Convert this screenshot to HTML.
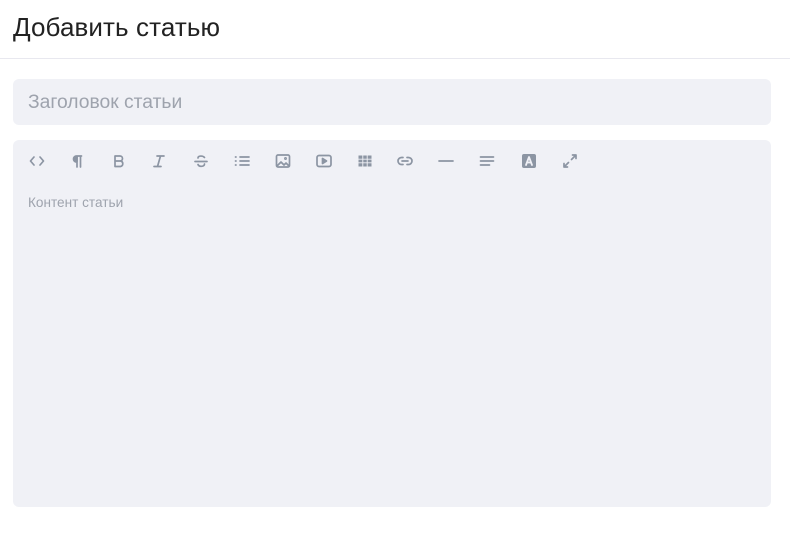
<!DOCTYPE html><html><head><meta charset="utf-8"><style>
body{margin:0;width:790px;height:542px;background:#fff;font-family:"Liberation Sans",sans-serif;position:relative;overflow:hidden}
h1{position:absolute;left:13px;top:10px;margin:0;font-size:26px;font-weight:normal;color:#222;line-height:34px;letter-spacing:0.1px}
.hr{position:absolute;left:0;top:58px;width:790px;height:1px;background:#e8e8ef}
.in{position:absolute;left:13px;top:79px;width:758px;height:46px;background:#f0f1f6;border-radius:6px}
.in span{position:absolute;left:15px;top:13px;font-size:19.3px;color:#9ea3ad}
.ed{position:absolute;left:13px;top:140px;width:758px;height:367px;background:#f0f1f6;border-radius:6px}
.ed .ph{position:absolute;left:15px;top:55px;font-size:13.6px;color:#9ea3ad}
svg.i{position:absolute;top:13px;width:16px;height:16px;fill:none;stroke:#8c95a3;stroke-width:1.7;stroke-linecap:round;stroke-linejoin:round}
</style></head><body>
<h1>Добавить статью</h1><div class="hr"></div>
<div class="in"><span>Заголовок статьи</span></div>
<div class="ed">
<svg class="i" style="left:16px" viewBox="0 0 16 16"><path d="M5 4L1.5 8 5 12M11 4l3.5 4L11 12"/></svg>
<svg class="i" style="left:57px" viewBox="0 0 16 16"><path d="M7 3v11M10.5 3v11M11.5 3H6.5a3 3 0 000 6H7" /><path d="M6.5 3.5a2.5 2.5 0 000 5H7V3.5z" fill="#8c95a3"/></svg>
<svg class="i" style="left:98px" viewBox="0 0 16 16"><path d="M4 3h5a2.5 2.5 0 010 5H4zM4 8h5.5a2.8 2.8 0 010 5.5H4z"/></svg>
<svg class="i" style="left:138px" viewBox="0 0 16 16"><path d="M6 3h7M3 13.5h7M9.5 3l-3 10.5"/></svg>
<svg class="i" style="left:180px" viewBox="0 0 16 16"><path d="M2 8.5h12M11.5 4.5C10 2.5 5 2.5 5 5M5 11.5c1 2.5 6.5 2.5 6.5-.5"/></svg>
<svg class="i" style="left:221px" viewBox="0 0 16 16"><path d="M6 4h9M6 8h9M6 12h9M1.5 4h.5M1.5 8h.5M1.5 12h.5"/></svg>
<svg class="i" style="left:262px" viewBox="0 0 16 16"><rect x="1.5" y="2" width="13" height="12" rx="1.5"/><path d="M2.5 12.5l3.5-3.5 3 3 2-2 2.5 2.5"/><circle cx="10.5" cy="5.5" r=".6"/></svg>
<svg class="i" style="left:303px" viewBox="0 0 16 16"><rect x="1" y="2.5" width="14" height="11" rx="2"/><path d="M6.5 5.5v5l4-2.5z" fill="#8c95a3"/></svg>
<svg class="i" style="left:344px" viewBox="0 0 16 16"><path d="M1.5 2.5h13v11h-13z" fill="#8c95a3" stroke="none"/><path d="M1.5 6.2h13M1.5 9.8h13M5.8 2.5v11M10.2 2.5v11" stroke="#f0f1f6" stroke-width="0.9"/></svg>
<svg class="i" style="left:384px" viewBox="0 0 16 16"><path d="M6 4.5H4.5a3.5 3.5 0 000 7H6M10 4.5h1.5a3.5 3.5 0 010 7H10M5 8h6"/></svg>
<svg class="i" style="left:425px" viewBox="0 0 16 16"><path d="M1 8h14"/></svg>
<svg class="i" style="left:466px" viewBox="0 0 16 16"><path d="M1.5 4h13M1.5 8h13M1.5 12h9"/></svg>
<svg class="i" style="left:508px" viewBox="0 0 16 16"><rect x="1" y="1" width="14" height="14" rx="2" fill="#8c95a3" stroke="none"/><path d="M5 12L8 4l3 8M6 9.5h4" stroke="#f0f1f6" stroke-width="1.8"/></svg>
<svg class="i" style="left:549px" viewBox="0 0 16 16"><path d="M9.5 6.5L14 2M10.5 2H14v3.5M6.5 9.5L2 14M2 10.5V14h3.5"/></svg>
<div class="ph">Контент статьи</div>
</div>
</body></html>
